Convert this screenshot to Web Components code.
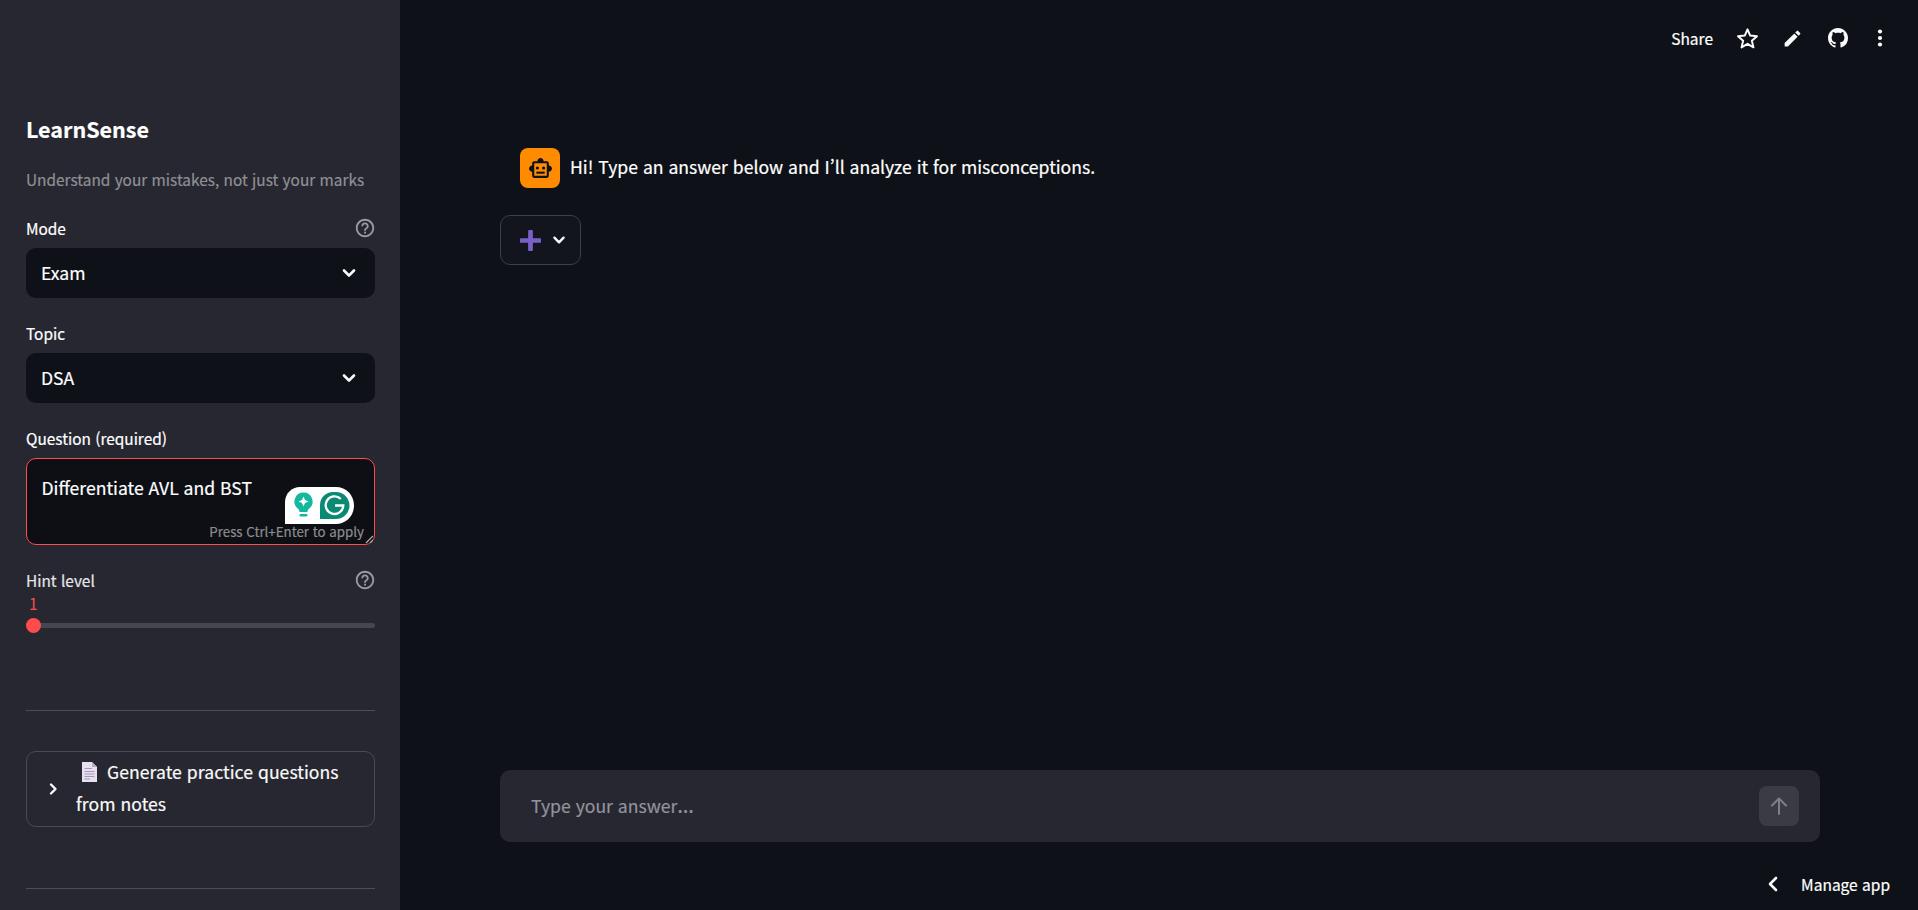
<!DOCTYPE html>
<html lang="ko"><head><meta charset="utf-8"><title>LearnSense</title>
<style>
html,body{margin:0;height:100%;overflow:hidden;background:#0e1117}
body{font-family:"Noto Sans CJK KR","Noto Sans",sans-serif;color:#fff;-webkit-text-stroke:.2px currentColor}
ls-app{height:910px}
</style></head><body>
<ls-app>
  <ls-sidebar slot="side">
    <ls-brand>LearnSense<span slot="sub">Understand your mistakes, not just your marks</span></ls-brand>
    <ls-select label="Mode" value="Exam" help></ls-select>
    <ls-select label="Topic" value="DSA"></ls-select>
    <ls-textarea label="Question (required)" value="Differentiate AVL and BST"></ls-textarea>
    <ls-slider label="Hint level" value="1"></ls-slider>
    <ls-divider style="margin-top:82.5px"></ls-divider>
    <ls-expander>Generate practice questions from notes</ls-expander>
    <ls-divider style="margin-top:61px"></ls-divider>
  </ls-sidebar>
  <ls-toolbar slot="top"></ls-toolbar>
  <ls-message slot="chat">Hi! Type an answer below and I’ll analyze it for misconceptions.</ls-message>
  <ls-popover slot="chat"></ls-popover>
  <ls-chat-input slot="input">Type your answer<span style="font-family:'Noto Sans',sans-serif;font-size:21px;line-height:20px">…</span></ls-chat-input>
  <ls-manage slot="foot">Manage app</ls-manage>
</ls-app>
<template id="help-icon"><svg width="22" height="22" viewBox="0 0 24 24" fill="#9b9ca0"><path d="M11 18h2v-2h-2v2zm1-16C6.48 2 2 6.48 2 12s4.48 10 10 10 10-4.48 10-10S17.52 2 12 2zm0 18c-4.41 0-8-3.59-8-8s3.59-8 8-8 8 3.59 8 8-3.59 8-8 8zm0-14c-2.21 0-4 1.79-4 4h2c0-1.1.9-2 2-2s2 .9 2 2c0 2-3 1.75-3 5h2c0-2.25 3-2.5 3-5 0-2.21-1.79-4-4-4z"/></svg></template>
<script>
function def(name, html){
  customElements.define(name, class extends HTMLElement{
    connectedCallback(){
      if(this.shadowRoot) return;
      const r=this.attachShadow({mode:'open'});
      r.innerHTML=typeof html==='function'?html(this):html;
    }
  });
}
const help=document.getElementById('help-icon').innerHTML;
const chev='<svg width="24" height="24" viewBox="0 0 24 24" fill="none" stroke="#fafafa" stroke-width="2.6" stroke-linecap="round" stroke-linejoin="round"><path d="M7 9.5l5 5 5-5"/></svg>';

def('ls-app',`<style>
:host{display:grid;grid-template-columns:400px 1fr;width:1918px;overflow:hidden}
.main{display:flex;flex-direction:column;min-width:0;height:910px}
.chat{display:flex;flex-direction:column;flex:1;padding:0 98px 0 100px;min-height:0}
.input{padding:0 98px 0 100px}
</style>
<slot name="side"></slot>
<div class="main">
  <slot name="top"></slot>
  <div class="chat"><slot name="chat"></slot></div>
  <div class="input"><slot name="input"></slot></div>
  <slot name="foot"></slot>
</div>`);

def('ls-sidebar',`<style>
:host{display:flex;flex-direction:column;background:#262730;padding:111px 25px 0 26px;height:910px;box-sizing:border-box;overflow:hidden}
</style><slot></slot>`);

def('ls-brand',`<style>
:host{display:block;font-size:21.5px;font-weight:600;line-height:36px}
::slotted(span){display:block;font-size:15.4px;font-weight:400;line-height:24px;color:#8f9095;margin-top:20px;white-space:nowrap}
</style><slot></slot><slot name="sub"></slot>`);

def('ls-select',h=>`<style>
:host{display:block;margin-top:${h.hasAttribute('help')?'25px':'23px'}}
.l{display:flex;justify-content:space-between;align-items:center;font-size:15.4px;line-height:24px;height:24px;margin-bottom:8px}
.l svg{display:block;margin-right:-1px}
.b{height:50px;background:#0e1117;border-radius:10px;display:flex;align-items:center;justify-content:space-between;padding:0 14px 0 15px;font-size:17.6px;box-sizing:border-box}
.b svg{display:block}
.b span{position:relative;top:-1px}
</style><div class="l"><span>${h.getAttribute('label')}</span>${h.hasAttribute('help')?help:''}</div>
<div class="b"><span>${h.getAttribute('value')}</span>${chev}</div>`);

def('ls-textarea',h=>`<style>
:host{display:block;margin-top:23px}
.l{font-size:15.4px;line-height:24px;height:24px;margin-bottom:8px}
.b{position:relative;height:87px;background:#0d0f15;border:1.25px solid #ff4b4b;border-radius:10px;box-sizing:border-box;padding:15px 14.5px;font-size:17.6px;line-height:28px}
.hint{position:absolute;right:10px;bottom:3px;font-size:13.3px;line-height:18px;color:#8c8d91}
.g{position:absolute;left:258px;top:27.75px;display:block}
.rz{position:absolute;right:1px;bottom:1px;display:block}
</style><div class="l">${h.getAttribute('label')}</div>
<div class="b">${h.getAttribute('value')}
<svg class="g" width="69" height="37" viewBox="0 0 69 37">
<path d="M0 37V15C0 6.7 6.7 0 15 0H51C61 0 69 8 69 18.500S61 37 51 37Z" fill="#fff"/>
<path d="M18.500 5.500a9 9 0 0 1 5.800 15.900c-1.400 1.200-1.800 2-1.800 3.600h-8c0-1.600-.4-2.400-1.800-3.600a9 9 0 0 1 5.800-15.900z" fill="#15b79e"/>
<path d="M18.500 9.500l1.500 3.500 3.500 1.500-3.500 1.500-1.500 3.500-1.500-3.500-3.500-1.500 3.500-1.500z" fill="#fff"/>
<rect x="14.500" y="27" width="8" height="2.500" rx="1.200" fill="#15b79e"/>
<path d="M35 32V18a13 13 0 0 1 13-13h3a13.500 13.500 0 0 1 0 27Z" fill="#0b8a73"/>
<path d="M55.800 12A8.800 8.800 0 1 0 58.300 18.500H50" fill="none" stroke="#fff" stroke-width="2.300"/>
</svg>
<span class="hint">Press Ctrl+Enter to apply</span>
<svg class="rz" width="8" height="8" viewBox="0 0 8 8" stroke="#b5b5b8" stroke-width="1.200"><path d="M1 8L8 1M5 8l3-3"/></svg>
</div>`);

def('ls-slider',h=>`<style>
:host{display:block;margin-top:23px}
.l{display:flex;justify-content:space-between;align-items:center;font-size:15.4px;line-height:24px;height:24px;color:#e6e6e8}
.l svg{display:block;margin-right:-1px}
.v{font-size:15.4px;line-height:20px;height:20px;color:#ff4b4b;padding-left:3px;margin-top:3px;-webkit-text-stroke:0;position:relative;top:-2px}
.t{position:relative;height:5px;background:#45464f;border-radius:5px;margin-top:7.5px}
.k{position:absolute;left:0;top:-5px;width:15px;height:15px;border-radius:50%;background:#ff4b4b}
</style><div class="l"><span>${h.getAttribute('label')}</span>${help}</div>
<div class="v">${h.getAttribute('value')}</div><div class="t"><div class="k"></div></div>`);

def('ls-divider',`<style>:host{display:block;height:1px;background:#4c4d56}</style>`);

def('ls-expander',`<style>
:host{display:flex;margin-top:40px;border:1.25px solid #4a4b54;border-radius:10px;height:76px;box-sizing:border-box;align-items:center;padding:0 18px 0 18px;gap:15px;font-size:17.6px;line-height:32px;color:#fafafa}
svg.c{flex:none;display:block}
.t{flex:1;position:relative;top:-1px;letter-spacing:.05px}
.p{display:inline-block;vertical-align:-3px;margin:0 10px 0 6px}
</style>
<svg class="c" width="16" height="16" viewBox="0 0 16 16" fill="none" stroke="#fafafa" stroke-width="2.400" stroke-linecap="round" stroke-linejoin="round"><path d="M6 3.500l4.500 4.500L6 12.500"/></svg>
<div class="t"><svg class="p" width="15" height="20" viewBox="0 0 15 20"><path d="M0 0H10L15 5V20H0Z" fill="#e8e0f0"/><path d="M10 0V5H15Z" fill="#b9adc8"/><path d="M2.500 6.500H10M2.500 9.500H12.500M2.500 12H12.500M2.500 14.500H12.500M2.500 17H8" stroke="#a59ab5" stroke-width="1"/></svg><slot></slot></div>`);

def('ls-toolbar',`<style>
:host{display:flex;justify-content:flex-end;align-items:center;height:76px;padding-right:24px;box-sizing:border-box;flex:none}
span{font-size:15.5px;margin-right:12px}
svg{display:block}
.i{width:45px;display:flex;justify-content:center}
</style><span>Share</span>
<div class="i"><svg width="25" height="25" viewBox="0 0 24 24" fill="none" stroke="#fafafa" stroke-width="1.900" stroke-linejoin="round"><path d="M12 3.200l2.600 6 6.500.6-4.900 4.300 1.500 6.400L12 17.100l-5.700 3.400 1.500-6.400-4.900-4.300 6.500-.6z"/></svg></div>
<div class="i"><svg width="21" height="21" viewBox="0 0 24 24" fill="#fafafa"><path d="M3 17.250V21h3.750L17.810 9.940l-3.750-3.750L3 17.250zM20.710 7.040a1 1 0 0 0 0-1.410l-2.340-2.340a1 1 0 0 0-1.410 0l-1.830 1.830 3.750 3.750 1.830-1.830z"/></svg></div>
<div class="i"><svg width="20" height="20" viewBox="0 0 16 16" fill="#fafafa"><path d="M8 0C3.580 0 0 3.580 0 8c0 3.540 2.290 6.530 5.470 7.590.4.070.55-.17.550-.38 0-.19-.010-.82-.010-1.490-2.010.37-2.530-.49-2.690-.94-.09-.23-.48-.94-.82-1.130-.28-.15-.68-.52-.01-.53.630-.010 1.080.58 1.230.82.720 1.210 1.870.87 2.330.66.070-.52.280-.87.510-1.070-1.780-.2-3.640-.89-3.640-3.950 0-.87.310-1.590.82-2.150-.08-.2-.36-1.020.08-2.120 0 0 .67-.21 2.200.82.640-.18 1.320-.27 2-.27s1.360.09 2 .27c1.530-1.040 2.200-.82 2.200-.82.440 1.100.16 1.920.08 2.120.51.560.82 1.270.82 2.150 0 3.070-1.870 3.750-3.650 3.950.29.250.54.730.54 1.480 0 1.070-.010 1.930-.010 2.200 0 .21.150.46.550.38A8.010 8.010 0 0 0 16 8c0-4.420-3.580-8-8-8z"/></svg></div>
<div class="i" style="width:40px;margin-right:-6px"><svg width="24" height="24" viewBox="0 0 24 24" fill="#fafafa"><circle cx="12" cy="5.500" r="2.100"/><circle cx="12" cy="12" r="2.100"/><circle cx="12" cy="18.500" r="2.100"/></svg></div>`);

def('ls-message',`<style>
:host{display:flex;align-items:center;gap:10px;margin:72px 0 0 20px;font-size:17.6px;line-height:40px}
.a{width:40px;height:40px;background:#ff8c00;border-radius:8px;display:flex;align-items:center;justify-content:center;flex:none}
svg{display:block}
.x{position:relative;top:-1px}
</style><div class="a"><svg width="25" height="25" viewBox="0 0 24 24" fill="none"><path fill="#0e1117" d="M20 9V7c0-1.100-.9-2-2-2h-3c0-1.660-1.340-3-3-3S9 3.340 9 5H6c-1.100 0-2 .9-2 2v2c-1.660 0-3 1.340-3 3s1.340 3 3 3v4c0 1.100.9 2 2 2h12c1.100 0 2-.9 2-2v-4c1.660 0 3-1.340 3-3s-1.340-3-3-3zm-2 10H6V7h12v12z"/><circle cx="9" cy="11.500" r="1.500" fill="#0e1117"/><circle cx="15" cy="11.500" r="1.500" fill="#0e1117"/><path fill="#0e1117" d="M8 15h8v2H8z"/></svg></div><div class="x"><slot></slot></div>`);

def('ls-popover',`<style>
:host{display:flex;width:81px;height:50px;box-sizing:border-box;border:1.25px solid #3d3f47;border-radius:10px;background:#12151d;margin-top:27px;align-items:center;padding-left:19px;gap:7px}
svg{display:block}
</style>
<svg width="21" height="21" viewBox="0 0 20 20"><path d="M10 1.500v17M1.500 10h17" stroke="#7a5fc7" stroke-width="4.500" stroke-linecap="round"/></svg>${chev.replace('width="24" height="24"','width="22" height="22"')}`);

def('ls-chat-input',`<style>
:host{display:flex;height:72px;background:#262730;border-radius:10px;align-items:center;justify-content:space-between;padding:0 21px 0 31px;font-size:17.6px;color:#92939a}
.s{width:40px;height:40px;border-radius:8px;background:#3a3b45;display:flex;align-items:center;justify-content:center}
svg{display:block}
.x{position:relative;top:-1px}
</style><div class="x"><slot></slot></div><div class="s"><svg width="24" height="24" viewBox="0 0 24 24" fill="none" stroke="#7f8087" stroke-width="2" stroke-linecap="round" stroke-linejoin="round"><path d="M12 20V4.500M5 11.500l7-7 7 7"/></svg></div>`);

def('ls-manage',`<style>
:host{display:flex;height:68px;flex:none;justify-content:flex-end;align-items:center;padding:16px 28px 0 0;font-size:15.5px;gap:18px;box-sizing:border-box}
svg{display:block}
</style><svg width="20" height="20" viewBox="0 0 20 20" fill="none" stroke="#fafafa" stroke-width="2.600" stroke-linecap="round" stroke-linejoin="round"><path d="M13 4L7 10l6 6"/></svg><slot></slot>`);
</script>
</body></html>
